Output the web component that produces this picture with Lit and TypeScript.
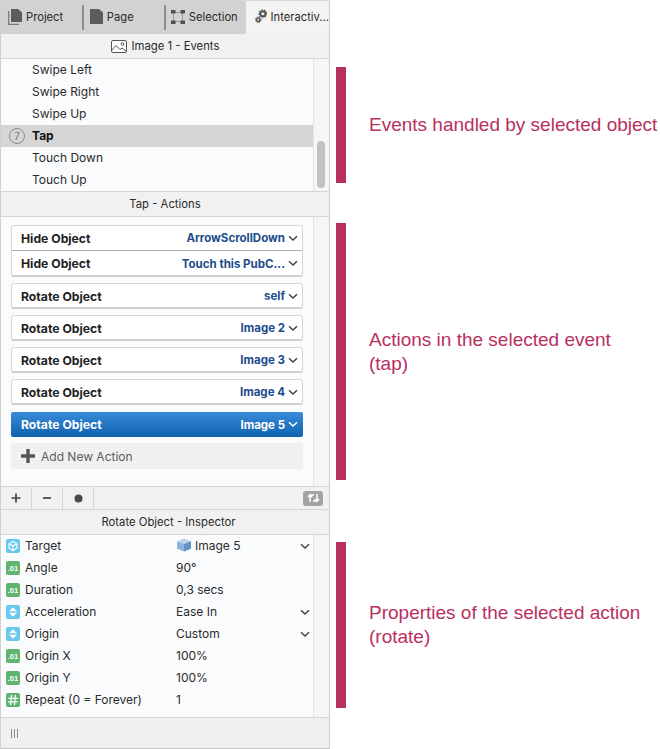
import { LitElement, html, css } from "lit";
import { customElement } from "lit/decorators.js";

const chev = (c = "#444") => html`<svg class="chev" width="10" height="7" viewBox="0 0 10 7"><path d="M1 1.2 5 5l4-3.8" fill="none" stroke=${c} stroke-width="1.5"/></svg>`;

const icons = {
  cube: html`<svg class="ic" width="14" height="14" viewBox="0 0 14 14"><rect width="14" height="14" rx="2" fill="#69c8ee"/><path d="M7 2.4 11 4.7v4.6L7 11.6 3 9.3V4.7Z M3 4.7 7 7l4-2.3 M7 7v4.6" fill="none" stroke="#fff" stroke-width="1.1"/></svg>`,
  num: html`<svg class="ic" width="14" height="14" viewBox="0 0 14 14"><rect width="14" height="14" rx="2" fill="#5fb56f"/><text x="7" y="10" text-anchor="middle" font-size="7.5" font-weight="700" font-family="Liberation Sans" fill="#fff">.01</text></svg>`,
  updown: html`<svg class="ic" width="14" height="14" viewBox="0 0 14 14"><rect width="14" height="14" rx="2" fill="#69c8ee"/><path d="M7 2.3 11 6.2H3Z M7 11.7 3 7.8H11Z" fill="#fff"/></svg>`,
  hash: html`<svg class="ic" width="14" height="14" viewBox="0 0 14 14"><rect width="14" height="14" rx="2" fill="#5fb56f"/><path d="M5.6 2 4.6 12 M9.4 2 8.4 12 M2.4 5.3H12 M2 8.9H11.6" fill="none" stroke="#fff" stroke-width="1.3"/></svg>`,
};

const cubeBlue = html`<svg class="cube" width="16" height="14" viewBox="0 0 16 14"><path d="M8 .5 15 3.2 8 6 1 3.2Z" fill="#b9d3e8"/><path d="M1 3.2 8 6v7.6L1 10.8Z" fill="#8db4d6"/><path d="M15 3.2 8 6v7.6l7-2.8Z" fill="#5f93c4"/></svg>`;

const tabIcons = {
  project: html`<svg width="14" height="16" viewBox="0 0 14 16"><path d="M3 0h7l4 3.5V13H3Z" fill="#5c5c5c"/><path d="M.7 2v13.3H11" fill="none" stroke="#777" stroke-width="1.2"/></svg>`,
  page: html`<svg width="13" height="15" viewBox="0 0 13 15"><path d="M0 0h9l4 3.5V15H0Z" fill="#5c5c5c"/></svg>`,
  selection: html`<svg width="14" height="14" viewBox="0 0 14 14"><path d="M2.5 2.5H11.5V11.5H2.5Z" fill="none" stroke="#999" stroke-width="1"/><path d="M0 0h4.5v3.5H0Z M9.5 0h4.5v3.5H9.5Z M0 10.5h4.5V14H0Z M9.5 10.5h4.5V14H9.5Z" fill="#4e4e4e"/></svg>`,
  gears: html`<svg width="12" height="15" viewBox="0 0 13 15"><circle cx="8.5" cy="4.5" r="2.8" fill="none" stroke="#555" stroke-width="2.2"/><circle cx="8.5" cy="4.5" r="4.3" fill="none" stroke="#555" stroke-width="1.1" stroke-dasharray="1.6 1.4"/><circle cx="3.5" cy="11" r="1.9" fill="none" stroke="#555" stroke-width="1.8"/><circle cx="3.5" cy="11" r="3.1" fill="none" stroke="#555" stroke-width="1" stroke-dasharray="1.4 1.2"/></svg>`,
};

const picture = html`<svg width="16" height="13" viewBox="0 0 16 13"><rect x=".5" y=".5" width="15" height="12" rx="1.5" fill="#fff" stroke="#555"/><path d="M1 10 5 5.5 9 9.5l2-1.5 4 3" fill="none" stroke="#555"/><circle cx="11.5" cy="4" r="1.4" fill="none" stroke="#555"/></svg>`;

const groups: [string, string][][] = [
  [["Hide Object", "ArrowScrollDown"], ["Hide Object", "Touch this PubC..."]],
  [["Rotate Object", "self"]],
  [["Rotate Object", "Image 2"]],
  [["Rotate Object", "Image 3"]],
  [["Rotate Object", "Image 4"]],
];

const props = [
  { i: icons.cube, n: "Target", v: "Image 5", c: true, cube: true },
  { i: icons.num, n: "Angle", v: "90°" },
  { i: icons.num, n: "Duration", v: "0,3 secs" },
  { i: icons.updown, n: "Acceleration", v: "Ease In", c: true },
  { i: icons.updown, n: "Origin", v: "Custom", c: true },
  { i: icons.num, n: "Origin X", v: "100%" },
  { i: icons.num, n: "Origin Y", v: "100%" },
  { i: icons.hash, n: "Repeat (0 = Forever)", v: "1" },
];

@customElement("app-root")
export class AppRoot extends LitElement {
  static styles = css`
    :host { display: flex; width: 660px; height: 749px; background: #fff; overflow: hidden; font-family: Inter, "Liberation Sans", sans-serif; font-size: 12px; color: #2a2a2a; }
    * { box-sizing: border-box; }
    .panel { width: 330px; height: 749px; flex: none; display: flex; flex-direction: column; background: #f3f3f3; border-left: 1px solid #d0d0d0; border-right: 1px solid #cfcfcf; border-bottom: 1px solid #c4c4c4; border-top: 1px solid #d6d6d6; }
    .tabs { display: flex; height: 33px; flex: none; background: #d2d2d2; font-size: 11.2px; }
    .tab { display: flex; align-items: center; gap: 4px; height: 33px; position: relative; padding-bottom: 2px; }
    .tab.p1 { width: 83px; padding-left: 7px; }
    .tab.p2 { width: 82px; padding-left: 6px; }
    .tab.p3 { width: 80px; padding-left: 5px; }
    .tab.active { flex: 1; background: #f3f3f3; padding-left: 9px; }
    .tab .sep { position: absolute; right: 0; top: 4px; width: 2px; height: 25px; background: #8e8e8e; }
    .tab.p3 .sep { display: none; }
    .head { flex: none; display: flex; align-items: center; justify-content: center; gap: 5px; background: #f1f1f1; border-bottom: 1px solid #d6d6d6; height: 25px; font-size: 11.3px; }
    .head.insp { padding-left: 7px; }
    .scroll { display: flex; flex: none; background: #f6f6f6; }
    .main { width: 313px; flex: none; background: #fafbfd; border-right: 1px solid #e4e4e4; }
    .gutter { flex: 1; position: relative; }
    .thumb { position: absolute; left: 3px; top: 82px; width: 8px; height: 47px; border-radius: 4px; background: #c2c2c2; }
    .events { height: 132px; }
    .ev { height: 22px; display: flex; align-items: center; padding: 0 0 2px 31px; position: relative; }
    .ev.sel { background: #d5d5d5; font-weight: 700; color: #111; }
    .badge { position: absolute; left: 8px; top: 3px; width: 16px; height: 16px; border: 1px solid #8a8a8a; border-radius: 50%; color: #7a7a7a; font-size: 10px; font-weight: 400; display: flex; align-items: center; justify-content: center; }
    .ev-sep { border-top: 1px solid #d6d6d6; height: 26px; }
    .actions { height: 269px; padding: 8px 10px 0 10px; display: flex; flex-direction: column; gap: 6px; }
    .group { background: #fff; border: 1px solid #d9d9d9; border-bottom: 2px solid #cfcfcf; border-radius: 3px; }
    .row { height: 23px; display: flex; align-items: center; padding: 1px 4px 0 9px; font-weight: 700; font-size: 12.2px; }
    .group .row:first-child:not(:last-child) { height: 24px; padding-top: 0; }
    .row + .row { border-top: 1px solid #acacac; height: 25px; }
    .row .t { flex: 1; color: #1f1f1f; }
    .row .v { color: #1c4c8c; margin-right: 3px; font-size: 11.5px; }
    .row.selected { height: 25px; margin-top: 1px; border: 0; border-radius: 2px; padding: 0 5px 0 10px; background: linear-gradient(#3a8ad9, #0e63ae); }
    .row.selected .t, .row.selected .v { color: #fff; }
    .add { height: 26px; background: #f0f0f0; border-radius: 3px; display: flex; align-items: center; gap: 6px; padding-left: 10px; color: #5c5c5c; }
    .bar { height: 24px; flex: none; display: flex; border-top: 1px solid #d6d6d6; border-bottom: 1px solid #d6d6d6; background: #f1f1f1; align-items: stretch; }
    .btn { width: 31px; display: flex; align-items: center; justify-content: center; border-right: 1px solid #d6d6d6; }
    .bar .spacer { flex: 1; display: flex; justify-content: flex-end; align-items: center; padding-right: 6px; }
    .loop { width: 20px; height: 15px; border-radius: 3px; background: #a3a3a3; display: flex; align-items: center; justify-content: center; }
    .inspector { height: 182px; }
    .prop { height: 22px; display: flex; align-items: center; padding-left: 5px; position: relative; }
    .ic { flex: none; margin-right: 5px; }
    .prop .n { width: 151px; flex: none; padding-bottom: 2px; }
    .prop .v { flex: 1; display: flex; align-items: center; gap: 3px; padding-bottom: 2px; }
    .prop .chev { margin-right: 3px; }
    .foot { flex: 1; border-top: 1px solid #d6d6d6; display: flex; align-items: center; padding-left: 10px; background: #f0f0f0; }
    .notes { flex: 1; display: flex; flex-direction: column; padding: 67px 0 0 6px; }
    .note { display: flex; align-items: center; gap: 23px; }
    .note .b { width: 10px; flex: none; align-self: stretch; background: #b8305f; }
    .note .x { font-family: "Liberation Sans", sans-serif; font-size: 19px; line-height: 24px; color: #b8305f; white-space: nowrap; }
    .n1 { height: 116px; } .n2 { height: 257px; margin-top: 40px; } .n3 { height: 166px; margin-top: 62px; }
  `;

  render() {
    return html`
      <div class="panel">
        <div class="tabs">
          <div class="tab p1">${tabIcons.project}<span>Project</span><i class="sep"></i></div>
          <div class="tab p2">${tabIcons.page}<span>Page</span><i class="sep"></i></div>
          <div class="tab p3">${tabIcons.selection}<span>Selection</span><i class="sep"></i></div>
          <div class="tab active">${tabIcons.gears}<span>Interactiv...</span></div>
        </div>
        <div class="head">${picture}<span>Image 1 - Events</span></div>
        <div class="scroll">
          <div class="main events">
            <div class="ev">Swipe Left</div>
            <div class="ev">Swipe Right</div>
            <div class="ev">Swipe Up</div>
            <div class="ev sel"><span class="badge">7</span>Tap</div>
            <div class="ev">Touch Down</div>
            <div class="ev">Touch Up</div>
          </div>
          <div class="gutter"><div class="thumb"></div></div>
        </div>
        <div class="head ev-sep">Tap - Actions</div>
        <div class="scroll">
          <div class="main actions">
            ${groups.map(g => html`<div class="group">${g.map(([t, v]) => html`<div class="row"><span class="t">${t}</span><span class="v">${v}</span>${chev()}</div>`)}</div>`)}
            <div class="row selected"><span class="t">Rotate Object</span><span class="v">Image 5</span>${chev("#fff")}</div>
            <div class="add"><svg width="14" height="14" viewBox="0 0 14 14"><path d="M7 0v14M0 7h14" stroke="#555" stroke-width="3.4"/></svg><span>Add New Action</span></div>
          </div>
          <div class="gutter"></div>
        </div>
        <div class="bar">
          <div class="btn"><svg width="10" height="10" viewBox="0 0 10 10"><path d="M5 .5v9M.5 5h9" stroke="#444" stroke-width="1.7"/></svg></div>
          <div class="btn"><svg width="10" height="10" viewBox="0 0 10 10"><path d="M1 5h8" stroke="#444" stroke-width="1.7"/></svg></div>
          <div class="btn"><svg width="9" height="9" viewBox="0 0 9 9"><circle cx="4.5" cy="4.5" r="4" fill="#4a4a4a"/></svg></div>
          <div class="spacer"><div class="loop"><svg width="13" height="10" viewBox="0 0 13 10"><path d="M3 9V2h4M1 4l2-2.5L5 4M10 1v7H6M8 6l2 2.5L12 6" fill="none" stroke="#fff" stroke-width="1.4"/></svg></div></div>
        </div>
        <div class="head insp">Rotate Object - Inspector</div>
        <div class="scroll">
          <div class="main inspector">
            ${props.map(p => html`<div class="prop">${p.i}<span class="n">${p.n}</span><span class="v">${p.cube ? cubeBlue : ""}${p.v}</span>${p.c ? chev() : ""}</div>`)}
          </div>
          <div class="gutter"></div>
        </div>
        <div class="foot"><svg width="8" height="9" viewBox="0 0 8 9"><path d="M.5 0v9M3.5 0v9M6.5 0v9" stroke="#8a8a8a"/></svg></div>
      </div>
      <div class="notes">
        <div class="note n1"><div class="b"></div><div class="x">Events handled by selected object</div></div>
        <div class="note n2"><div class="b"></div><div class="x">Actions in the selected event<br>(tap)</div></div>
        <div class="note n3"><div class="b"></div><div class="x">Properties of the selected action<br>(rotate)</div></div>
      </div>
    `;
  }
}
